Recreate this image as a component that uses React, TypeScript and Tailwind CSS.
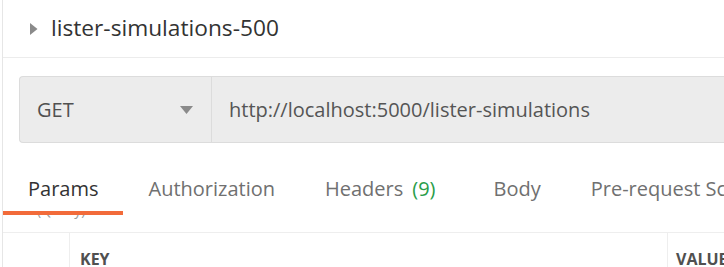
const tabs = [
    { label: "Params", active: true },
    { label: "Authorization" },
    { label: "Headers", count: "(9)" },
    { label: "Body" },
    { label: "Pre-request Script" },
]

const App = () => {
    return (
        <div
            className="w-[724px] h-[267px] overflow-hidden bg-white text-[#505050]"
            style={{ fontFamily: "'Open Sans', sans-serif" }}
        >
            <div className="ml-[2px] h-full border-l border-[#e6e6e6] flex flex-col">
                {/* request name */}
                <div className="h-[58px] flex items-center pl-[27px] border-b border-[#ececec] shrink-0">
                    <svg width="8" height="12" viewBox="0 0 8 12" className="mr-[13px]">
                        <path d="M0 0 L7.5 6 L0 12 Z" fill="#8a8a8a" />
                    </svg>
                    <span className="text-[22.7px] text-[#333] leading-none">lister-simulations-500</span>
                </div>

                {/* url bar */}
                <div className="pl-[16px] pt-[18px] shrink-0">
                    <div className="h-[67px] flex bg-[#ececec] border border-r-0 border-[#dcdcdc] rounded-l-[4px]">
                        <div className="w-[192px] flex items-center justify-between pl-[17px] pr-[18px] border-r border-[#dcdcdc]">
                            <span className="text-[20px] text-[#505050]">GET</span>
                            <svg width="13" height="8" viewBox="0 0 13 8">
                                <path d="M0 0 L13 0 L6.5 8 Z" fill="#8a8a8a" />
                            </svg>
                        </div>
                        <div className="flex items-center pl-[17px] text-[20px] text-[#555]">
                            http://localhost:5000/lister-simulations
                        </div>
                    </div>
                </div>

                {/* tabs */}
                <div className="relative h-[90px] shrink-0 border-b border-[#eeeeee]">
                    <div className="absolute left-[34px] top-[72px] h-[4px] overflow-hidden">
                        <div className="-mt-[16px] text-[14px] leading-[21px] text-[#999]">(Query)</div>
                    </div>
                    <div className="flex items-start pt-[31px] whitespace-nowrap">
                        {tabs.map((t) => (
                            <div
                                key={t.label}
                                className={
                                    t.active
                                        ? "relative pl-[25px] pr-[25px] h-[41px] text-[20px] leading-[30px] text-[#333] border-b-[4px] border-[#f26b3a]"
                                        : t.count
                                          ? "pl-[25px] pr-[33px] text-[20px] leading-[30px] text-[#707070]"
                                          : "px-[25px] text-[20px] leading-[30px] text-[#707070]"
                                }
                            >
                                {t.label}
                                {t.count && <span className="ml-[9px] text-[#2a9d4a]">{t.count}</span>}
                            </div>
                        ))}
                    </div>
                </div>

                {/* table header */}
                <div className="flex flex-1">
                    <div className="w-[67px] shrink-0 border-r border-[#eeeeee]" />
                    <div className="w-[598px] shrink-0 border-r border-[#eeeeee] pl-[10px] pt-[14px] text-[16px] font-bold text-[#505050]">
                        KEY
                    </div>
                    <div className="pl-[8px] pt-[14px] text-[16px] font-bold text-[#505050] whitespace-nowrap">VALUE</div>
                </div>
            </div>
        </div>
    )
}

export default App
